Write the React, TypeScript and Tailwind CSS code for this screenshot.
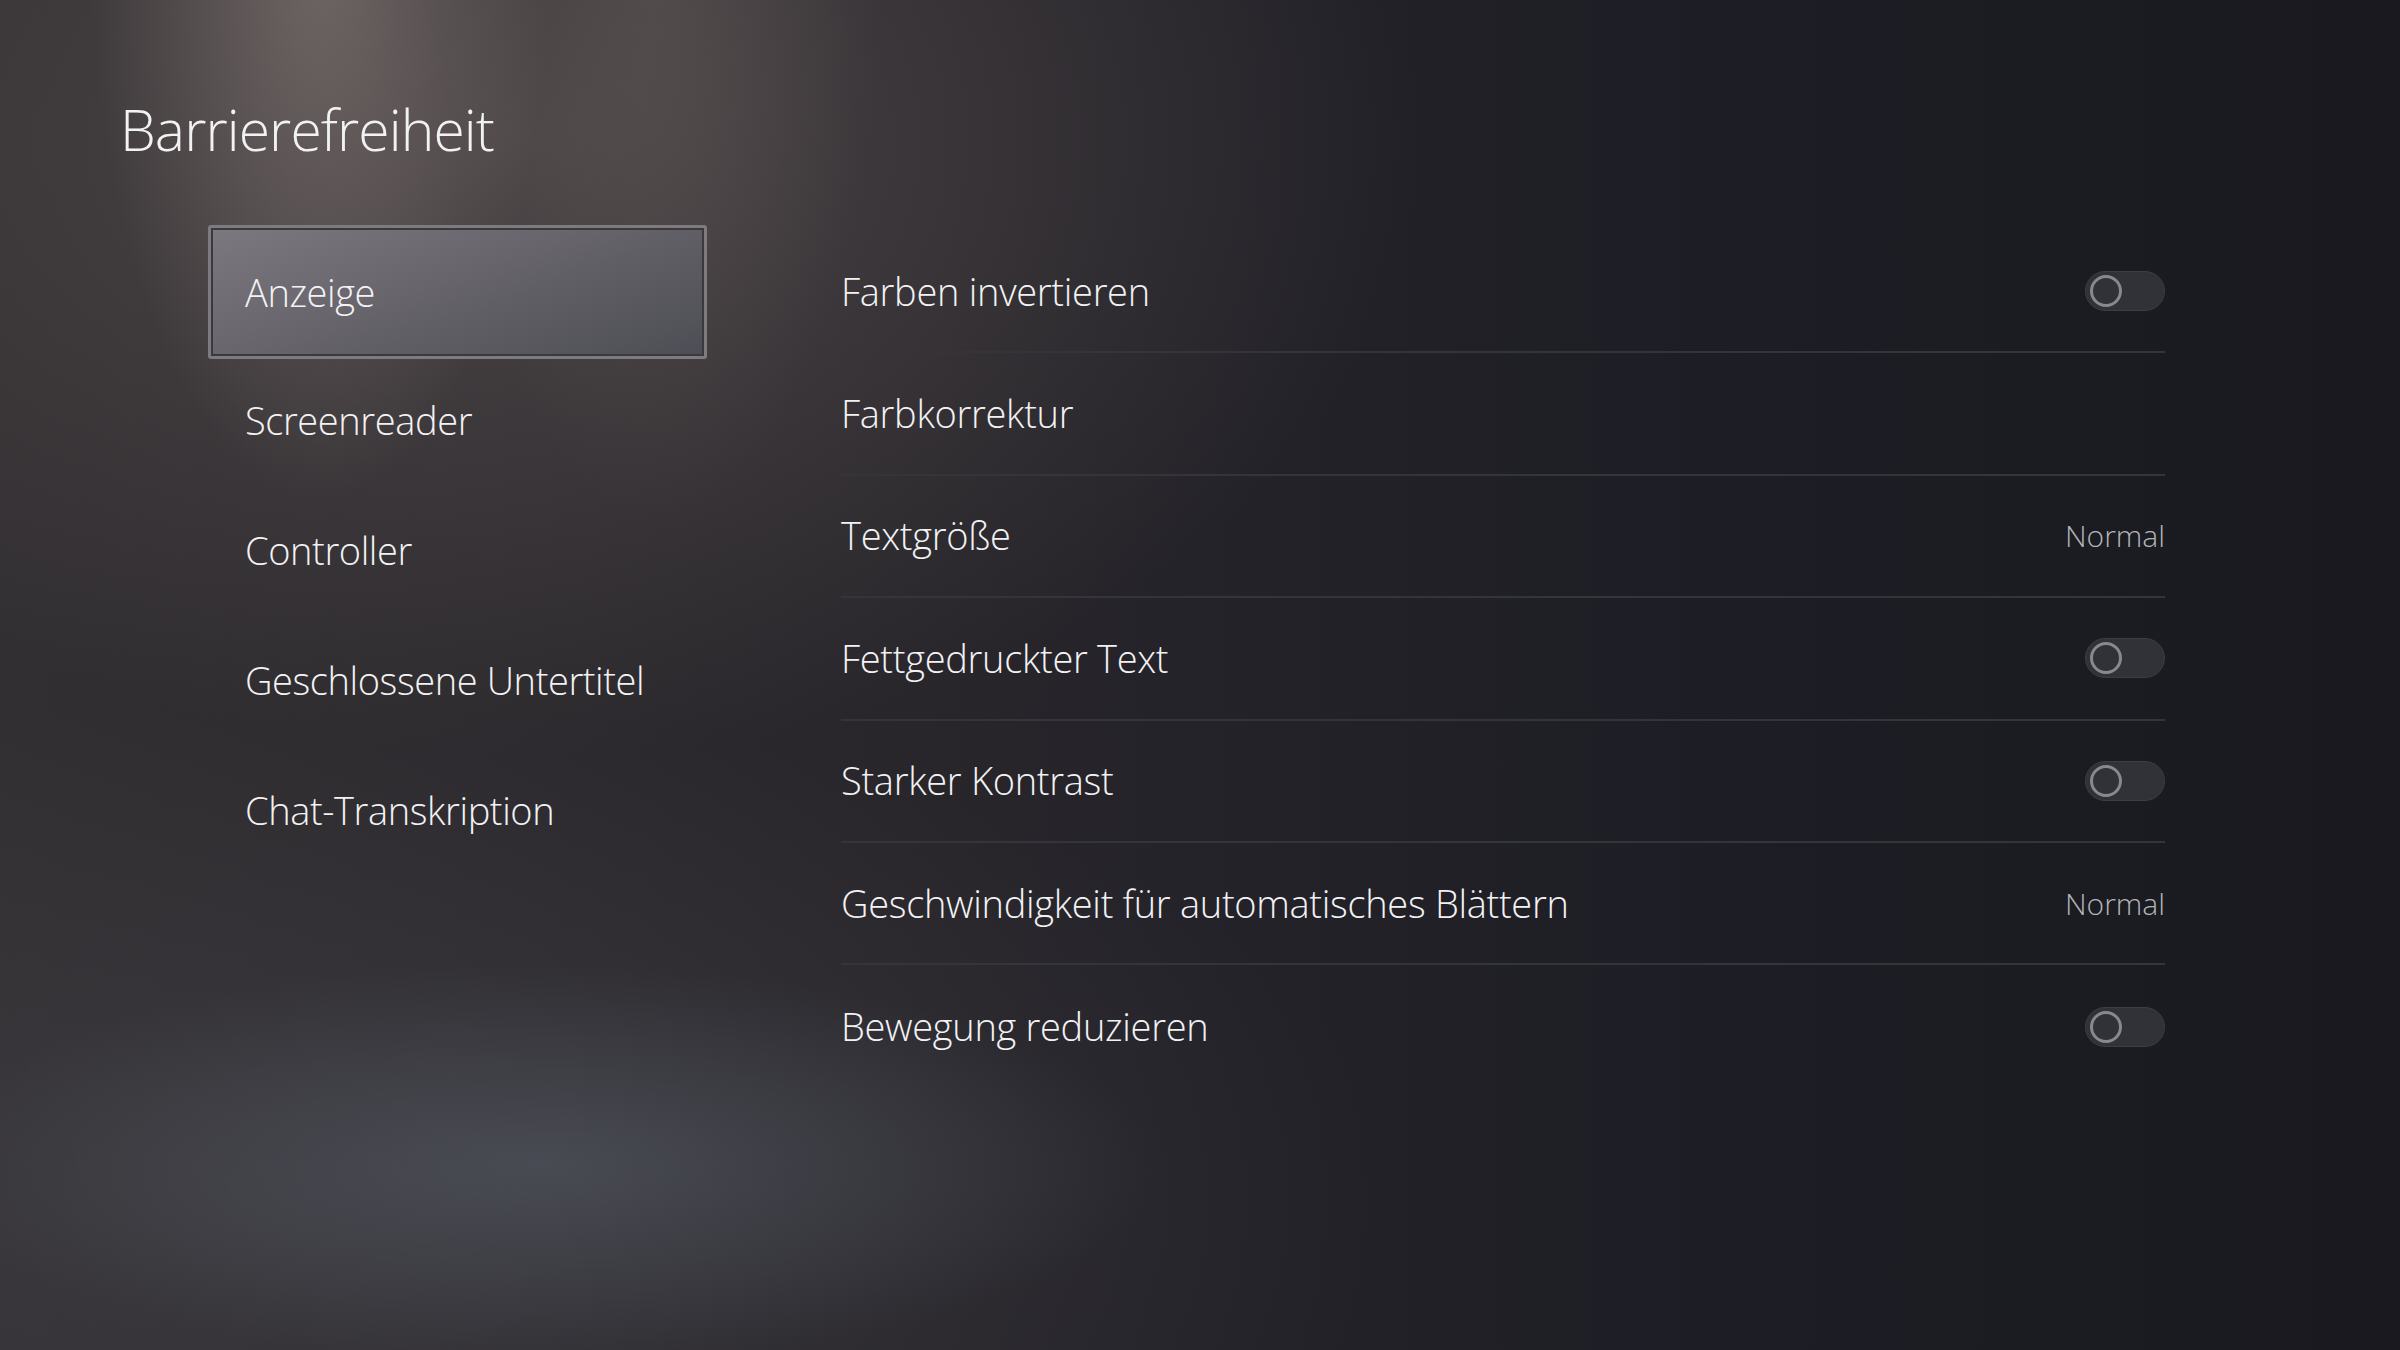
import { useState } from "react";

const font = "font-['Open_Sans','Noto_Sans',sans-serif]";

const menu = ["Anzeige", "Screenreader", "Controller", "Geschlossene Untertitel", "Chat-Transkription"];

type Row = { label: string; kind: "toggle" | "value" | "link"; value?: string };

const rows: Row[] = [
  { label: "Farben invertieren", kind: "toggle" },
  { label: "Farbkorrektur", kind: "link" },
  { label: "Textgröße", kind: "value", value: "Normal" },
  { label: "Fettgedruckter Text", kind: "toggle" },
  { label: "Starker Kontrast", kind: "toggle" },
  { label: "Geschwindigkeit für automatisches Blättern", kind: "value", value: "Normal" },
  { label: "Bewegung reduzieren", kind: "toggle" },
];

function Toggle() {
  return (
    <div className="flex h-[40px] w-[80px] items-center rounded-full border border-[#3c3c44] bg-[#313138] pl-[4px]">
      <div className="h-[32px] w-[32px] rounded-full border-[3px] border-[#8a888e]" />
    </div>
  );
}

export default function App() {
  const [active] = useState(0);
  return (
    <div
      className={`${font} relative h-[1350px] w-full overflow-hidden font-light text-[#f2f2f4] bg-[radial-gradient(ellipse_230px_560px_at_320px_-60px,rgba(165,152,146,0.45),transparent),radial-gradient(ellipse_220px_560px_at_660px_-40px,rgba(150,138,132,0.2),transparent),radial-gradient(ellipse_900px_620px_at_520px_140px,rgba(105,94,93,0.5),transparent),radial-gradient(ellipse_620px_200px_at_540px_1165px,rgba(92,98,110,0.5),transparent),radial-gradient(ellipse_1100px_500px_at_300px_1200px,rgba(70,70,76,0.45),transparent),linear-gradient(to_right,#322f32_0%,#28262b_38%,#1d1d25_72%,#19191f_100%)]`}
    >
      {/* 見出し */}
      <h1 className="pl-[120px] pt-[101px] text-[57px] leading-none tracking-[-0.9px]">Barrierefreiheit</h1>

      <div className="mt-[67px] flex items-start pl-[208px]">
        {/* 左メニュー */}
        <ul className="flex w-[499px] flex-col">
          {menu.map((m, i) =>
            i === active ? (
              <li
                key={m}
                className="-mb-[4px] flex h-[134px] items-center rounded-[3px] border-[3px] border-[#7d7a80] bg-[linear-gradient(160deg,#7c7880_0%,#67646b_45%,#4d4e55_100%)] pl-[34px] text-[38px] tracking-[-0.4px] shadow-[inset_0_0_0_2px_#3b393e]"
              >
                {m}
              </li>
            ) : (
              <li key={m} className="flex h-[130px] items-center pl-[37px] text-[38px] tracking-[-0.4px]">
                {m}
              </li>
            ),
          )}
        </ul>

        {/* 右の設定一覧 */}
        <ul className="ml-[134px] mt-[6px] flex w-[1324px] flex-col">
          {rows.map((r, i) => (
            <li
              key={r.label}
              className={`flex h-[122.4px] items-center justify-between ${i < rows.length - 1 ? "border-b-2 border-[#34343b]" : ""}`}
            >
              <span className="text-[38px] tracking-[-0.3px]">{r.label}</span>
              {r.kind === "toggle" && <Toggle />}
              {r.kind === "value" && <span className="text-[30px] text-[#b3b3b8]">{r.value}</span>}
            </li>
          ))}
        </ul>
      </div>
    </div>
  );
}
